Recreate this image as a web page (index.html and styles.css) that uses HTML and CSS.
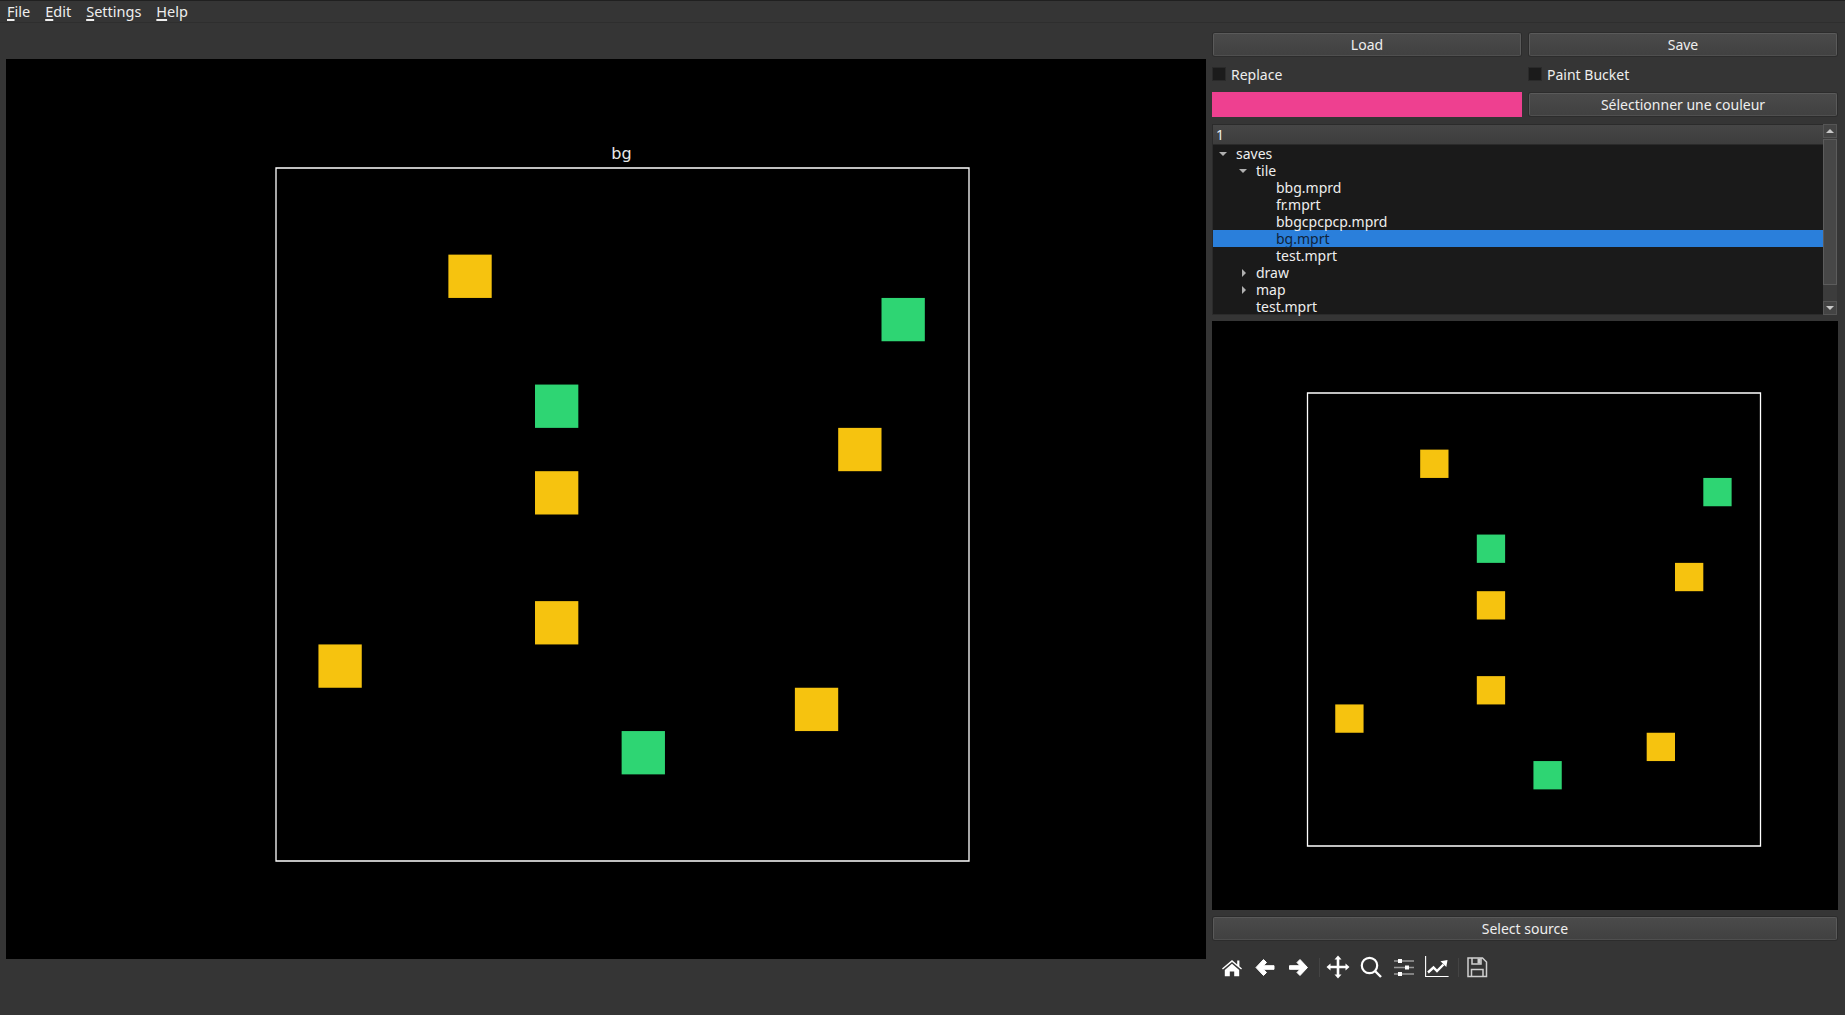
FILE: index.html
```html
<!DOCTYPE html>
<html lang="en">
<head>
    <meta charset="UTF-8">
    <meta name="viewport" content="width=device-width, initial-scale=1.0">
    <title>Tile Editor</title>
    <link rel="stylesheet" href="styles.css">
</head>
<body>
    <div class="menubar">
        <span class="menu-item"><u>F</u>ile</span>
        <span class="menu-item"><u>E</u>dit</span>
        <span class="menu-item"><u>S</u>ettings</span>
        <span class="menu-item"><u>H</u>elp</span>
    </div>

    <div class="main">
        <div class="canvas">
            <div class="plot-title">bg</div>
            <svg class="plot" viewBox="0 0 16 16">
                <defs>
                    <g id="tiles">
                        <g transform="translate(-0.02 0)">
                            <rect class="tile-y" x="4" y="2" width="1" height="1"/>
                            <rect class="tile-g" x="14" y="3" width="1" height="1"/>
                            <rect class="tile-g" x="6" y="5" width="1" height="1"/>
                            <rect class="tile-y" x="13" y="6" width="1" height="1"/>
                            <rect class="tile-y" x="6" y="7" width="1" height="1"/>
                            <rect class="tile-y" x="6" y="10" width="1" height="1"/>
                            <rect class="tile-y" x="1" y="11" width="1" height="1"/>
                            <rect class="tile-y" x="12" y="12" width="1" height="1"/>
                            <rect class="tile-g" x="8" y="13" width="1" height="1"/>
                        </g>
                        <rect class="frame" x="0" y="0" width="16" height="16"/>
                    </g>
                </defs>
                <use href="#tiles"/>
            </svg>
        </div>

        <div class="side">
            <div class="form-grid">
                <button class="btn">Load</button>
                <button class="btn">Save</button>
                <label class="check"><span class="check-box"></span>Replace</label>
                <label class="check"><span class="check-box"></span>Paint Bucket</label>
                <div class="swatch"></div>
                <button class="btn">Sélectionner une couleur</button>
            </div>

            <div class="tree-box">
                <div class="tree-body">
                    <div class="tree-header">1</div>
                    <div class="row level-0"><span class="twisty open"></span>saves</div>
                    <div class="row level-1"><span class="twisty open"></span>tile</div>
                    <div class="row level-2"><span class="twisty"></span>bbg.mprd</div>
                    <div class="row level-2"><span class="twisty"></span>fr.mprt</div>
                    <div class="row level-2"><span class="twisty"></span>bbgcpcpcp.mprd</div>
                    <div class="row level-2 selected"><span class="twisty"></span>bg.mprt</div>
                    <div class="row level-2"><span class="twisty"></span>test.mprt</div>
                    <div class="row level-1"><span class="twisty closed"></span>draw</div>
                    <div class="row level-1"><span class="twisty closed"></span>map</div>
                    <div class="row level-1"><span class="twisty"></span>test.mprt</div>
                </div>
                <div class="scrollbar">
                    <div class="scroll-btn"><span class="arrow-up"></span></div>
                    <div class="scroll-track"><div class="scroll-thumb"></div></div>
                    <div class="scroll-btn"><span class="arrow-down"></span></div>
                </div>
            </div>

            <div class="preview">
                <svg class="plot-small" viewBox="0 0 16 16"><use href="#tiles"/></svg>
            </div>

            <button class="btn btn-source">Select source</button>

            <div class="toolbar">
                <!-- home -->
                <svg class="tool" viewBox="0 0 24 24"><path class="ico" d="M12 5 2 13.6l.9 1L12 6.9l9.1 7.7.9-1-2.600-2.300V5.600h-2.200v3.900z"/><path class="ico" d="M4.800 15 12 8.800l7.200 6.200v6.200h-5v-4.800H9.800v4.800h-5z"/></svg>
                <!-- back -->
                <svg class="tool" viewBox="0 0 24 24"><path class="ico-round" d="M3 12.500 10.500 4.500 13.500 7.500l-3 3.200H21v3.600H10.500l3 3.200-3 3z"/></svg>
                <!-- forward -->
                <svg class="tool" viewBox="0 0 24 24"><path class="ico-round" d="M21.500 12.500 14 4.500 11 7.500l3 3.200H3.500v3.600H14l-3 3.200 3 3z"/></svg>
                <span class="tool-sep"></span>
                <!-- move -->
                <svg class="tool" viewBox="0 0 24 24"><path class="ico" d="M12 .5 15.500 4.500H13.300V10.700H19.500V8.500L23.500 12 19.500 15.500V13.300H13.300V19.500H15.500L12 23.500 8.500 19.500H10.700V13.300H4.500V15.500L.5 12 4.500 8.500V10.700H10.700V4.500H8.500z"/></svg>
                <!-- zoom -->
                <svg class="tool" viewBox="0 0 24 24"><circle class="line" cx="10.500" cy="10.500" r="7.700" stroke-width="2.200"/><path class="line" d="M16 16 22 22" stroke-width="2.400"/></svg>
                <!-- subplots -->
                <svg class="tool" viewBox="0 0 24 24"><path class="line dim" d="M2 6h20M2 12.500h20M2 19h20" stroke-width="1.400"/><rect class="ico" x="6" y="4" width="4" height="4"/><rect class="ico" x="13" y="10.500" width="4" height="4"/><rect class="ico" x="6" y="17" width="4" height="4"/></svg>
                <!-- edit axis -->
                <svg class="tool" viewBox="0 0 24 24"><path class="line" d="M.6 1v20.500h23" stroke-width="1.100"/><path class="line" d="M3 17.500 8.500 12.500l3.500 3.500 6.500-6.500" stroke-width="2.400"/><path class="ico" d="M15.500 6.200 22.500 5 21.300 12z"/></svg>
                <span class="tool-sep"></span>
                <!-- save -->
                <svg class="tool" viewBox="0 0 24 24"><path class="line soft" d="M3 3h14.500L21.500 7v14.500H3z" stroke-width="1.500"/><path class="line soft" d="M7 3v6h9V3M6.500 21.500v-7h11.500v7" stroke-width="1.500"/><rect class="ico soft-fill" x="12.500" y="3.500" width="3" height="5"/></svg>
            </div>
        </div>
    </div>
</body>
</html>
```

FILE: styles.css
```css
* {
    box-sizing: border-box;
}

body {
    margin: 0;
    height: 1015px;
    overflow: hidden;
    background-color: #353535;
    color: #eeeeee;
    font-family: "Noto Sans", sans-serif;
    font-size: 14px;
}

.menubar {
    display: flex;
    height: 23px;
    padding-left: 7px;
    border-top: 1px solid #202020;
    border-bottom: 1px solid #2e2e2e;
    font-size: 14.5px;
    line-height: 21px;
}

.menu-item {
    margin-right: 15px;
}

.menu-item u {
    text-decoration-thickness: 2px;
    text-underline-offset: 2px;
}

.main {
    display: flex;
    gap: 6px;
    padding-left: 6px;
}

.canvas {
    width: 1200px;
    height: 900px;
    margin-top: 36px;
    padding: 84.5px 0 0 269.5px;
    background-color: #000000;
}

.plot-title {
    width: 692px;
    height: 24px;
    font-family: "DejaVu Sans", sans-serif;
    font-size: 16px;
    line-height: 19px;
    text-align: center;
    color: #e8e8e8;
}

.plot {
    display: block;
    width: 693px;
    height: 693px;
    overflow: visible;
}

.tile-y {
    fill: #f6c30f;
}

.tile-g {
    fill: #2ed573;
}

.frame {
    fill: none;
    stroke: #ffffff;
    stroke-width: 1.3px;
    vector-effect: non-scaling-stroke;
}

.side {
    width: 626px;
    padding-top: 10px;
}

.form-grid {
    display: grid;
    grid-template-columns: 310px 310px;
    grid-template-rows: 23px 24px 25px;
    gap: 6px;
    align-items: center;
}

.btn {
    height: 23px;
    margin-left: 1px;
    padding: 0;
    background: linear-gradient(#4a4a4a, #414141);
    border: 1px solid #5a5a5a;
    border-bottom-color: #4f4f4f;
    border-radius: 2px;
    color: #eeeeee;
    font-family: "Noto Sans", sans-serif;
    font-size: 14px;
    line-height: 20px;
    box-shadow: 0 0 0 1px #2c2c2c;
}

.form-grid .btn {
    width: 308px;
}

.check {
    display: flex;
    align-items: center;
    gap: 5px;
}

.check-box {
    width: 14px;
    height: 14px;
    background-color: #1b1b1b;
    border: 1px solid #2a2a2a;
}

.swatch {
    height: 25px;
    width: 310px;
    background-color: #ee4090;
}

.tree-box {
    display: flex;
    width: 626px;
    height: 191px;
    margin-top: 7px;
    padding-right: 1px;
}

.tree-body {
    width: 611px;
    background-color: #1a1a1a;
    border: 1px solid #2b2b2b;
    border-right: none;
    line-height: 17px;
}

.tree-header {
    height: 20px;
    padding-left: 3px;
    background: linear-gradient(#464646, #3d3d3d);
    border-bottom: 1px solid #2a2a2a;
    line-height: 20px;
}

.row {
    display: flex;
    align-items: center;
    height: 17px;
}

.level-0 {
    padding-left: 6px;
}

.level-1 {
    padding-left: 26px;
}

.level-2 {
    padding-left: 46px;
}

.selected {
    background-color: #2a7fdb;
    color: #10233a;
}

.twisty {
    flex: none;
    width: 17px;
}

.twisty.open::before {
    content: "";
    display: block;
    width: 0;
    border-top: 4px solid #b0b0b0;
    border-left: 4px solid transparent;
    border-right: 4px solid transparent;
}

.twisty.closed {
    padding-left: 3px;
}

.twisty.closed::before {
    content: "";
    display: block;
    width: 0;
    border-left: 4px solid #b0b0b0;
    border-top: 4px solid transparent;
    border-bottom: 4px solid transparent;
}

.scrollbar {
    display: flex;
    flex-direction: column;
    width: 14px;
    background-color: #3c3c3c;
}

.scroll-btn {
    display: flex;
    align-items: center;
    justify-content: center;
    height: 14px;
    background-color: #444444;
    border: 1px solid #555555;
}

.arrow-up {
    border-bottom: 4px solid #c8c8c8;
    border-left: 4px solid transparent;
    border-right: 4px solid transparent;
}

.arrow-down {
    border-top: 4px solid #c8c8c8;
    border-left: 4px solid transparent;
    border-right: 4px solid transparent;
}

.scroll-track {
    flex: 1;
    padding-top: 1px;
}

.scroll-thumb {
    height: 146px;
    background-color: #474747;
    border: 1px solid #5c5c5c;
}

.preview {
    width: 626px;
    height: 589px;
    margin-top: 6px;
    padding: 71.5px 0 0 94.5px;
    background-color: #000000;
}

.plot-small {
    display: block;
    width: 454px;
    height: 453px;
    overflow: visible;
}

.btn-source {
    display: block;
    width: 624px;
    margin-top: 7px;
}

.toolbar {
    display: flex;
    align-items: center;
    height: 24px;
    margin-top: 15px;
    padding-left: 8px;
}

.tool {
    width: 24px;
    height: 24px;
    flex: none;
    margin-right: 9px;
}

.tool-sep {
    flex: none;
    width: 1px;
    height: 19px;
    margin-right: 6px;
    background-color: #444444;
}

.ico {
    fill: #ffffff;
}

.ico-round {
    fill: #ffffff;
    stroke: #ffffff;
    stroke-width: 1px;
    stroke-linejoin: round;
}

.line {
    fill: none;
    stroke: #ffffff;
}

.line.dim {
    stroke: #9a9a9a;
}

.line.soft {
    stroke: #cfcfcf;
}

.soft-fill {
    fill: #cfcfcf;
}
```
